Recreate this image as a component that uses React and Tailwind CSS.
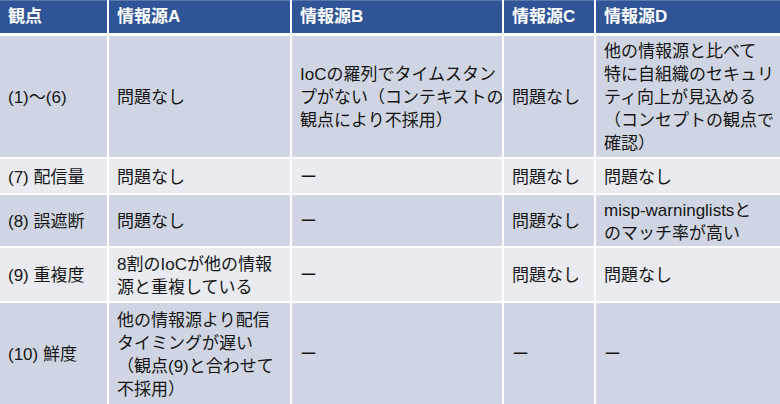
const rows = [
  {
    h: "h-[121px]",
    bg: "bg-[#cfd5e2]",
    cells: [
      ["(1)〜(6)"],
      ["問題なし"],
      ["IoCの羅列でタイムスタン", "プがない（コンテキストの", "観点により不採用）"],
      ["問題なし"],
      ["他の情報源と比べて", "特に自組織のセキュリ", "ティ向上が見込める", "（コンセプトの観点で", "確認）"],
    ],
  },
  {
    h: "h-[34px]",
    bg: "bg-[#e9ebf1]",
    cells: [["(7) 配信量"], ["問題なし"], ["ー"], ["問題なし"], ["問題なし"]],
  },
  {
    h: "h-[51px]",
    bg: "bg-[#cfd5e2]",
    cells: [
      ["(8) 誤遮断"],
      ["問題なし"],
      ["ー"],
      ["問題なし"],
      ["misp-warninglistsと", "のマッチ率が高い"],
    ],
  },
  {
    h: "h-[53px]",
    bg: "bg-[#e9ebf1]",
    cells: [
      ["(9) 重複度"],
      ["8割のIoCが他の情報", "源と重複している"],
      ["ー"],
      ["問題なし"],
      ["問題なし"],
    ],
  },
  {
    h: "h-[101px]",
    bg: "bg-[#cfd5e2]",
    cells: [
      ["(10) 鮮度"],
      ["他の情報源より配信", "タイミングが遅い", "（観点(9)と合わせて", "不採用）"],
      ["ー"],
      ["ー"],
      ["ー"],
    ],
  },
];

const headers = ["観点", "情報源A", "情報源B", "情報源C", "情報源D"];

function Cell({ lines, bg, h }) {
  return (
    <div className={`${bg} ${h} flex flex-col justify-center pl-2 pr-1 pt-[2px] overflow-hidden`}>
      {lines.map((l, i) => (
        <div key={i} className="whitespace-nowrap leading-[23px]">
          {l}
        </div>
      ))}
    </div>
  );
}

export default function App() {
  return (
    <div
      className="w-[780px] h-[404px] bg-white text-[#151515] text-[17px] overflow-hidden"
      style={{ fontFamily: '"Liberation Sans", "Noto Sans CJK JP", sans-serif' }}
    >
      <div className="grid grid-cols-[107px_181px_210px_90px_184px] gap-x-[2px] gap-y-[2px]">
        {headers.map((t) => (
          <div
            key={t}
            className="h-[33px] mb-[1px] bg-[#2f5597] border-t border-[#5a79ae] flex items-center pl-2 text-white font-bold text-[17px]"
          >
            {t}
          </div>
        ))}
        {rows.map((r, ri) =>
          r.cells.map((c, ci) => <Cell key={`${ri}-${ci}`} lines={c} bg={r.bg} h={r.h} />)
        )}
      </div>
    </div>
  );
}
